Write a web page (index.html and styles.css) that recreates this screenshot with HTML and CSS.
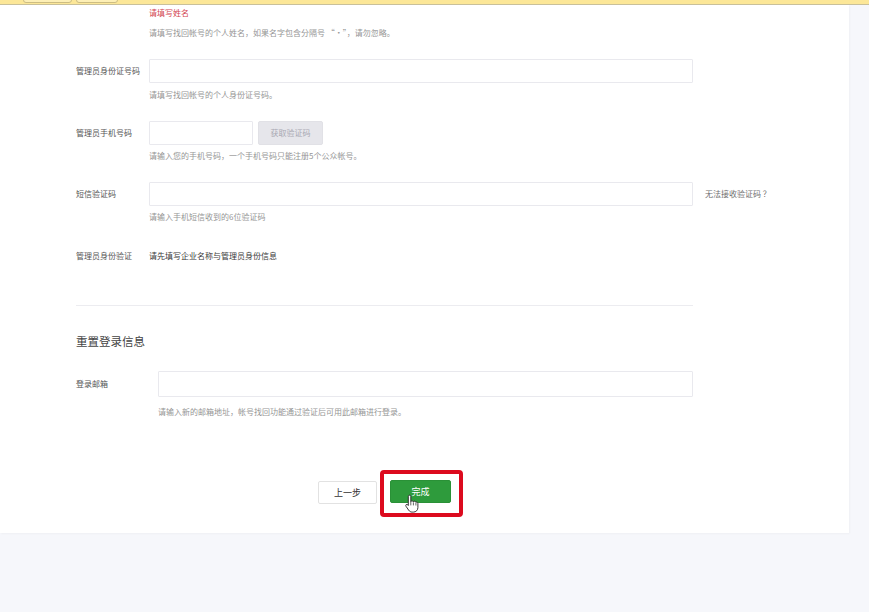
FILE: index.html
```html
<!DOCTYPE html>
<html lang="zh-CN">
<head>
<meta charset="utf-8">
<title>重置登录信息</title>
<link rel="stylesheet" href="styles.css">
</head>
<body>
<div class="topbar">
  <span class="tb-btn tb-btn-a"></span>
  <span class="tb-btn tb-btn-b"></span>
</div>
<main class="card">
  <div class="form">
    <div class="field">
      <span class="label"></span>
      <div class="control"><p class="err">请填写姓名</p></div>
      <p class="hint hint-gap8">请填写找回帐号的个人姓名，如果名字包含分隔号 “·”，请勿忽略。</p>
    </div>

    <div class="field field-gap">
      <span class="label">管理员身份证号码</span>
      <div class="control"><input class="input input-full" type="text"></div>
      <p class="hint hint-gap6">请填写找回帐号的个人身份证号码。</p>
    </div>

    <div class="field field-gap">
      <span class="label">管理员手机号码</span>
      <div class="control">
        <input class="input input-phone" type="text">
        <button class="code-btn" type="button">获取验证码</button>
      </div>
      <p class="hint hint-gap5">请输入您的手机号码，一个手机号码只能注册5个公众帐号。</p>
    </div>

    <div class="field field-gap">
      <span class="label">短信验证码</span>
      <div class="control">
        <input class="input input-full" type="text">
        <a class="link">无法接收验证码 ？</a>
      </div>
      <p class="hint hint-gap5">请输入手机短信收到的6位验证码</p>
    </div>

    <div class="field field-gap21">
      <span class="label">管理员身份验证</span>
      <div class="control"><span class="value">请先填写企业名称与管理员身份信息</span></div>
    </div>

    <hr class="divider">

    <h2 class="section-title">重置登录信息</h2>

    <div class="field field-wide field-gap21">
      <span class="label label-tall">登录邮箱</span>
      <div class="control"><input class="input input-full input-tall" type="text"></div>
      <p class="hint hint-gap9">请输入新的邮箱地址，帐号找回功能通过验证后可用此邮箱进行登录。</p>
    </div>

    <div class="actions">
      <button class="btn btn-default" type="button">上一步</button>
      <span class="highlight">
        <button class="btn btn-primary" type="button">完成</button>
        <svg class="cursor" width="14" height="19" viewBox="0 0 14 19">
          <path d="M4.5 1.2c.8 0 1.3.6 1.3 1.3v5.2c.2-.6.7-.9 1.3-.9.7 0 1.2.5 1.3 1.1.2-.4.7-.7 1.2-.7.7 0 1.2.5 1.3 1.2.2-.2.5-.3.8-.3.7 0 1.2.6 1.2 1.3v4.1c0 2.6-1.9 4.6-4.5 4.6H7.2c-1.5 0-2.6-.7-3.5-1.9L1 12.300c-.4-.6-.3-1.3.2-1.7.5-.4 1.2-.3 1.6.2l.5.7V2.5c0-.7.5-1.3 1.2-1.3z" fill="#fff" stroke="#222" stroke-width="0.9" stroke-linejoin="round"/>
          <path d="M5.8 8v3.4M8.4 8.3v3.1M10.9 9v2.5" stroke="#222" stroke-width="0.7" fill="none"/>
        </svg>
      </span>
    </div>
  </div>
</main>
</body>
</html>
```

FILE: styles.css
```css
* { box-sizing: border-box; }

html, body {
  margin: 0;
  padding: 0;
}

body {
  background: #f6f7fb;
  font-family: "Noto Sans CJK SC", "Noto Sans", "Liberation Sans", sans-serif;
  font-size: 8px;
  line-height: 12px;
  color: #555;
  width: 869px;
  height: 612px;
  overflow: hidden;
}

.topbar {
  height: 5px;
  background: #fce798;
  border-bottom: 1px solid #c9c09a;
  display: flex;
  align-items: flex-end;
  padding-left: 23px;
  gap: 4px;
  overflow: hidden;
}

.tb-btn {
  display: block;
  height: 14px;
  margin-bottom: 1px;
  border: 1px solid #cdbd82;
  border-radius: 3px;
  background: #fdefb6;
}
.tb-btn-a { width: 49px; }
.tb-btn-b { width: 42px; }

.card {
  width: 849px;
  background: #fff;
  padding: 2px 0 29px;
  box-shadow: 1px 1px 2px rgba(0, 0, 0, 0.03);
}

.form {
  margin-left: 76px;
  width: 617px;
}

.field {
  display: grid;
  grid-template-columns: 73px 544px;
}
.field-wide {
  grid-template-columns: 82px 535px;
}
.field-gap { margin-top: 20px; }
.field-gap21 { margin-top: 21px; }

.label {
  grid-column: 1;
  grid-row: 1;
  line-height: 24px;
  color: #555;
  white-space: nowrap;
}
.label-tall { line-height: 26px; }

.control {
  grid-column: 2;
  grid-row: 1;
  display: flex;
  align-items: center;
  gap: 5px;
  min-height: 12px;
}

.err {
  margin: 0;
  color: #d2444f;
  line-height: 12px;
}

.hint {
  grid-column: 2;
  grid-row: 2;
  margin: 0;
  color: #959595;
  line-height: 12px;
  white-space: nowrap;
}
.hint-gap5 { margin-top: 5px; }
.hint-gap6 { margin-top: 6px; }
.hint-gap8 { margin-top: 8px; }
.hint-gap9 { margin-top: 9px; }

.input {
  height: 24px;
  border: 1px solid #e9e9ee;
  border-radius: 1px;
  background: #fff;
  padding: 0 6px;
  font: inherit;
  outline: none;
  flex-shrink: 0;
}
.input-full { width: 100%; }
.input-tall { height: 26px; }
.input-phone { width: 104px; }

.code-btn {
  width: 65px;
  height: 24px;
  border: 1px solid #e1e1e6;
  border-radius: 2px;
  background: #e6e6eb;
  color: #a9a9b3;
  font: inherit;
  padding: 0;
}

.link {
  flex-shrink: 0;
  margin-left: 7px;
  color: #707070;
  white-space: nowrap;
}

.value {
  line-height: 24px;
  color: #3a3a3a;
}

.divider {
  margin: 37px 0 0;
  border: 0;
  border-top: 1px solid #ececf0;
  height: 0;
}

.section-title {
  margin: 26px 0 0;
  font-size: 11.5px;
  line-height: 18px;
  font-weight: normal;
  color: #444;
}

.actions {
  margin-top: 62px;
  display: flex;
  justify-content: center;
  align-items: flex-start;
  gap: 13px;
}

.btn {
  height: 23px;
  font: inherit;
  font-size: 9px;
  border-radius: 2px;
  padding: 0;
  cursor: pointer;
}

.btn-default {
  width: 59px;
  margin-top: 1px;
  background: #fff;
  border: 1px solid #e2e2e2;
  color: #333;
}

.btn-primary {
  display: block;
  width: 61px;
  background: #2e9b3c;
  border: 1px solid #2a9137;
  color: #fff;
}

.highlight {
  position: relative;
  display: block;
}
.highlight::after {
  content: "";
  position: absolute;
  left: -10px;
  right: -12px;
  top: -10px;
  bottom: -14px;
  border: 4px solid #dc0a1e;
  border-radius: 4px;
  pointer-events: none;
}

.cursor {
  position: absolute;
  left: 15px;
  top: 14px;
}
```
